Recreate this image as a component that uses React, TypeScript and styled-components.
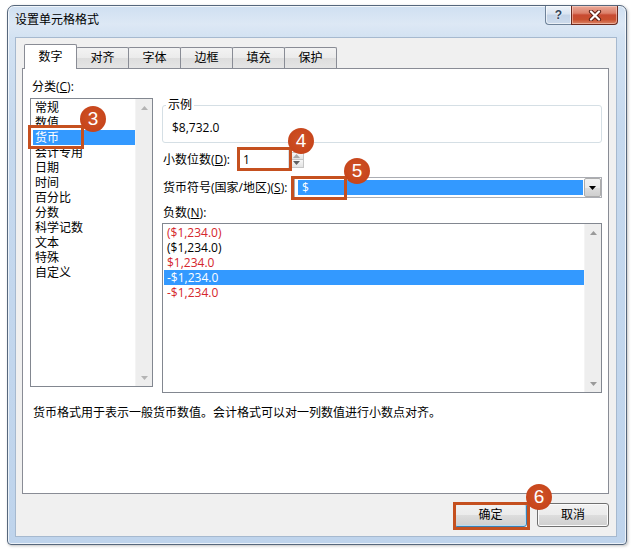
import React from "react";
import styled, { createGlobalStyle } from "styled-components";

const FONT = `"Segoe UI", "Open Sans", "Noto Sans CJK SC", sans-serif`;

const Global = createGlobalStyle`
  html, body { margin: 0; padding: 0; background: #fff; }
  body { font-family: ${FONT}; font-size: 12px; color: #000; }
  *, *::before, *::after { box-sizing: border-box; }
  u { text-underline-offset: 1px; }
`;

const Page = styled.div`
  width: 632px;
  height: 554px;
  padding: 5px 0 0 7px;
  background: #fff;
  overflow: hidden;
`;

const Window = styled.div`
  width: 620px;
  height: 540px;
  border: 1px solid #56677c;
  border-radius: 7px 7px 4px 4px;
  background: linear-gradient(180deg, #cfdff1 0px, #dde8f5 18px, #d3e2f2 31px, #c6d9ee 120px, #bfd4ec 100%);
  box-shadow: inset 0 0 0 1px rgba(255, 255, 255, 0.7), 1px 1px 3px rgba(0, 0, 0, 0.25);
  padding: 0 9px 7px 7px;
  display: flex;
  flex-direction: column;
`;

const TitleBar = styled.div`
  height: 31px;
  display: flex;
  justify-content: space-between;
  align-items: flex-start;
  flex-shrink: 0;
`;

const Title = styled.div`
  padding-top: 7px;
  line-height: 14px;
  font-size: 12px;
  color: #000;
`;

const CaptionGroup = styled.div`
  display: flex;
  margin-right: -1px;
`;

const HelpButton = styled.div`
  width: 26px;
  height: 19px;
  border: 1px solid #6e8299;
  border-top: none;
  border-right: none;
  border-radius: 0 0 0 4px;
  background: linear-gradient(180deg, #eef3f9 0%, #d9e4f1 45%, #c3d3e7 50%, #cddbec 100%);
  box-shadow: inset 0 0 0 1px rgba(255, 255, 255, 0.6);
  display: flex;
  align-items: center;
  justify-content: center;
  font: bold 12px "Liberation Sans", Arial, sans-serif;
  color: #34465c;
  text-shadow: 0 0 2px #fff;
`;

const CloseButton = styled.div`
  width: 47px;
  height: 19px;
  border: 1px solid #6b2a1e;
  border-top: none;
  border-radius: 0 0 4px 0;
  background: linear-gradient(180deg, #e9a897 0%, #dc7f69 40%, #c84a31 50%, #c9502f 75%, #db8466 100%);
  box-shadow: inset 0 0 0 1px rgba(255, 220, 210, 0.5);
  display: flex;
  align-items: center;
  justify-content: center;
`;

const Client = styled.div`
  flex: 1;
  border: 1px solid #a6b9cf;
  background: #f0f0f0;
  padding-top: 6px;
  display: flex;
  flex-direction: column;
`;

const TabRow = styled.div`
  height: 24px;
  display: flex;
  align-items: flex-end;
  padding-left: 9px;
  flex-shrink: 0;
`;

const Tab = styled.div<{ $active?: boolean }>`
  position: relative;
  width: 53px;
  height: ${(p) => (p.$active ? 25 : 21)}px;
  margin-bottom: ${(p) => (p.$active ? -1 : 0)}px;
  margin-left: -1px;
  z-index: ${(p) => (p.$active ? 1 : 0)};
  border: 1px solid #898c95;
  border-bottom: none;
  border-radius: 2px 2px 0 0;
  background: ${(p) => (p.$active ? "#fff" : "linear-gradient(180deg, #f3f3f3 0%, #ebebeb 50%, #dddddd 51%, #e5e5e5 100%)")};
  display: flex;
  align-items: center;
  justify-content: center;
  line-height: 14px;
  padding-bottom: ${(p) => (p.$active ? 1 : 0)}px;
`;

const Panel = styled.div`
  height: 426px;
  margin: 0 7px 0 6px;
  border: 1px solid #898c95;
  background: #fff;
  display: flex;
  flex-direction: column;
  flex-shrink: 0;
`;

const Top = styled.div`
  display: flex;
  padding-left: 7px;
`;

const LeftCol = styled.div`
  width: 123px;
  padding-top: 11px;
  display: flex;
  flex-direction: column;
`;

const FieldLabel = styled.div`
  height: 14px;
  line-height: 14px;
  padding-left: 2px;
  white-space: nowrap;
`;

const ListBox = styled.div<{ $h: number; $mt: number }>`
  height: ${(p) => p.$h}px;
  margin-top: ${(p) => p.$mt}px;
  border: 1px solid #828790;
  background: #fff;
  display: flex;
`;

const ListItems = styled.div<{ $pl: number }>`
  flex: 1;
  padding: 1px 0 0 ${(p) => p.$pl}px;
`;

const ListItem = styled.div<{ $selected?: boolean; $color?: string; $ip: number }>`
  position: relative;
  height: 15px;
  line-height: 15px;
  padding-left: ${(p) => p.$ip}px;
  white-space: nowrap;
  color: ${(p) => (p.$selected ? "#fff" : p.$color || "#000")};
  background: ${(p) => (p.$selected ? "#3399ff" : "transparent")};
`;

const ScrollBar = styled.div`
  width: 17px;
  background: #eeeeee;
  display: flex;
  flex-direction: column;
  justify-content: space-between;
  border-left: 1px solid #f4f4f4;
`;

const ScrollArrow = styled.div`
  height: 17px;
  display: flex;
  align-items: center;
  justify-content: center;
`;

const RightCol = styled.div`
  flex: 1;
  margin: 0 6px 0 9px;
  padding-top: 36px;
  display: flex;
  flex-direction: column;
`;

const GroupBox = styled.div`
  position: relative;
  height: 38px;
  border: 1px solid #d5dfe5;
  border-radius: 3px;
  padding: 15px 0 0 9px;
  line-height: 14px;
`;

const GroupLegend = styled.div`
  position: absolute;
  top: -8px;
  left: 3px;
  padding: 0 2px;
  background: #fff;
  line-height: 14px;
`;

const FormRow = styled.div<{ $mt: number }>`
  display: flex;
  align-items: center;
  height: 21px;
  margin-top: ${(p) => p.$mt}px;
`;

const RowLabel = styled.div<{ $w: number }>`
  width: ${(p) => p.$w}px;
  flex-shrink: 0;
  padding-left: 1px;
  line-height: 14px;
  white-space: nowrap;
`;

const SpinField = styled.div`
  position: relative;
  display: flex;
  align-items: center;
`;

const TextBox = styled.div`
  width: 51px;
  height: 21px;
  border: 1px solid #dbdfe6;
  border-top-color: #abadb3;
  background: #fff;
  padding-left: 4px;
  line-height: 19px;
`;

const Spinner = styled.div`
  width: 15px;
  height: 16px;
  display: flex;
  flex-direction: column;
`;

const SpinHalf = styled.div`
  flex: 1;
  border: 1px solid #c6c6c6;
  background: linear-gradient(180deg, #f7f7f7, #e3e3e3);
  display: flex;
  align-items: center;
  justify-content: center;
  & + & { border-top: none; }
`;

const Combo = styled.div`
  position: relative;
  flex: 1;
  height: 21px;
  border: 1px solid #abadb3;
  background: #fff;
  display: flex;
  padding: 2px 0 2px 2px;
`;

const ComboValue = styled.div`
  flex: 1;
  margin-left: 1px;
  margin-right: 1px;
  background: #3399ff;
  color: #fff;
  padding-left: 4px;
  line-height: 15px;
`;

const ComboButton = styled.div`
  width: 17px;
  margin: -2px 0;
  border: 1px solid #acacac;
  border-radius: 2px;
  background: linear-gradient(180deg, #f2f2f2 0%, #ebebeb 50%, #dddddd 51%, #cfcfcf 100%);
  display: flex;
  align-items: center;
  justify-content: center;
`;

const Description = styled.div`
  margin-top: 13px;
  padding-left: 10px;
  line-height: 14px;
  white-space: nowrap;
`;

const ButtonRow = styled.div`
  display: flex;
  justify-content: flex-end;
  gap: 10px;
  margin-top: 9px;
  padding-right: 7px;
`;

const DialogButton = styled.div<{ $default?: boolean; $w: number }>`
  position: relative;
  width: ${(p) => p.$w}px;
  height: 24px;
  border: 1px solid ${(p) => (p.$default ? "#3c7fb1" : "#707070")};
  border-radius: 3px;
  background: linear-gradient(180deg, #f2f2f2 0%, #ebebeb 50%, #dddddd 51%, #cfcfcf 100%);
  box-shadow: inset 0 0 0 1px ${(p) => (p.$default ? "#b6dcf3" : "#fbfbfb")};
  text-align: center;
  line-height: 22px;
`;

const Marker = styled.div<{ $l: number; $t: number; $w: number; $h: number }>`
  position: absolute;
  left: ${(p) => p.$l}px;
  top: ${(p) => p.$t}px;
  width: ${(p) => p.$w}px;
  height: ${(p) => p.$h}px;
  border: 3px solid #c5501f;
  pointer-events: none;
  z-index: 2;
`;

const Badge = styled.div<{ $l: number; $t: number }>`
  position: absolute;
  left: ${(p) => p.$l}px;
  top: ${(p) => p.$t}px;
  width: 26px;
  height: 26px;
  border-radius: 50%;
  background: radial-gradient(circle at 50% 45%, #cf5226 0%, #c7451b 70%, #bf3f17 100%);
  color: #fff;
  font: 19px "Liberation Sans", Arial, sans-serif;
  line-height: 26px;
  text-align: center;
  z-index: 3;
`;

const Callout: React.FC<{
  n: number;
  rect: [number, number, number, number];
  badge: [number, number];
}> = ({ n, rect, badge }) => (
  <>
    <Marker $l={rect[0]} $t={rect[1]} $w={rect[2]} $h={rect[3]} />
    <Badge $l={badge[0]} $t={badge[1]}>{n}</Badge>
  </>
);

const Tri: React.FC<{ dir: "up" | "down"; color: string }> = ({ dir, color }) => (
  <svg width="7" height="4" viewBox="0 0 7 4">
    <path d={dir === "up" ? "M0 4 L3.5 0 L7 4 Z" : "M0 0 L7 0 L3.5 4 Z"} fill={color} />
  </svg>
);

const categories = ["常规", "数值", "货币", "会计专用", "日期", "时间", "百分比", "分数", "科学记数", "文本", "特殊", "自定义"];

const RED = "#d5262c";
const negatives: { text: string; color: string }[] = [
  { text: "($1,234.0)", color: RED },
  { text: "($1,234.0)", color: "#000" },
  { text: "$1,234.0", color: RED },
  { text: "-$1,234.0", color: "#000" },
  { text: "-$1,234.0", color: RED },
];

const tabs = ["数字", "对齐", "字体", "边框", "填充", "保护"];

export default function App() {
  return (
    <Page>
      <Global />
      <Window>
        <TitleBar>
          <Title>设置单元格格式</Title>
          <CaptionGroup>
            <HelpButton>?</HelpButton>
            <CloseButton>
              <svg width="14" height="11" viewBox="0 0 14 11">
                <path d="M3 1.5 L11 9.5 M11 1.5 L3 9.5" stroke="#5b1f15" strokeWidth="4.2" strokeLinecap="round" />
                <path d="M3 1.5 L11 9.5 M11 1.5 L3 9.5" stroke="#fff" strokeWidth="2.2" strokeLinecap="round" />
              </svg>
            </CloseButton>
          </CaptionGroup>
        </TitleBar>
        <Client>
          <TabRow>
            {tabs.map((t, i) => (
              <Tab key={t} $active={i === 0}>{t}</Tab>
            ))}
          </TabRow>
          <Panel>
            <Top>
              <LeftCol>
                <FieldLabel>
                  分类(<u>C</u>):
                </FieldLabel>
                <ListBox $h={289} $mt={4}>
                  <ListItems $pl={2}>
                    {categories.map((c) => (
                      <ListItem key={c} $ip={2} $selected={c === "货币"}>
                        {c}
                        {c === "货币" && <Callout n={3} rect={[-5, -5, 56, 24]} badge={[47, -24]} />}
                      </ListItem>
                    ))}
                  </ListItems>
                  <ScrollBar>
                    <ScrollArrow>
                      <Tri dir="up" color="#b4b4b4" />
                    </ScrollArrow>
                    <ScrollArrow>
                      <Tri dir="down" color="#b4b4b4" />
                    </ScrollArrow>
                  </ScrollBar>
                </ListBox>
              </LeftCol>
              <RightCol>
                <GroupBox>
                  <GroupLegend>示例</GroupLegend>
                  $8,732.0
                </GroupBox>
                <FormRow $mt={6}>
                  <RowLabel $w={76}>
                    小数位数(<u>D</u>):
                  </RowLabel>
                  <SpinField>
                    <TextBox>1</TextBox>
                    <Spinner>
                      <SpinHalf>
                        <Tri dir="up" color="#a8a8a8" />
                      </SpinHalf>
                      <SpinHalf>
                        <Tri dir="down" color="#606060" />
                      </SpinHalf>
                    </Spinner>
                    <Callout n={4} rect={[-1, -2, 55, 24]} badge={[50, -21]} />
                  </SpinField>
                </FormRow>
                <FormRow $mt={7}>
                  <RowLabel $w={132}>
                    货币符号(国家/地区)(<u>S</u>):
                  </RowLabel>
                  <Combo>
                    <ComboValue>$</ComboValue>
                    <ComboButton>
                      <Tri dir="down" color="#000" />
                    </ComboButton>
                    <Callout n={5} rect={[-4, -2, 56, 24]} badge={[49, -20]} />
                  </Combo>
                </FormRow>
                <FieldLabel style={{ marginTop: 8, paddingLeft: 1 }}>
                  负数(<u>N</u>):
                </FieldLabel>
                <ListBox $h={170} $mt={3}>
                  <ListItems $pl={1}>
                    {negatives.map((n, i) => (
                      <ListItem key={i} $ip={3} $color={n.color} $selected={i === 3}>
                        {n.text}
                      </ListItem>
                    ))}
                  </ListItems>
                  <ScrollBar>
                    <ScrollArrow>
                      <Tri dir="up" color="#9a9a9a" />
                    </ScrollArrow>
                    <ScrollArrow>
                      <Tri dir="down" color="#9a9a9a" />
                    </ScrollArrow>
                  </ScrollBar>
                </ListBox>
              </RightCol>
            </Top>
            <Description>货币格式用于表示一般货币数值。会计格式可以对一列数值进行小数点对齐。</Description>
          </Panel>
          <ButtonRow>
            <DialogButton $default $w={73}>
              确定
              <Callout n={6} rect={[-2, -2, 77, 28]} badge={[71, -20]} />
            </DialogButton>
            <DialogButton $w={72}>取消</DialogButton>
          </ButtonRow>
        </Client>
      </Window>
    </Page>
  );
}
